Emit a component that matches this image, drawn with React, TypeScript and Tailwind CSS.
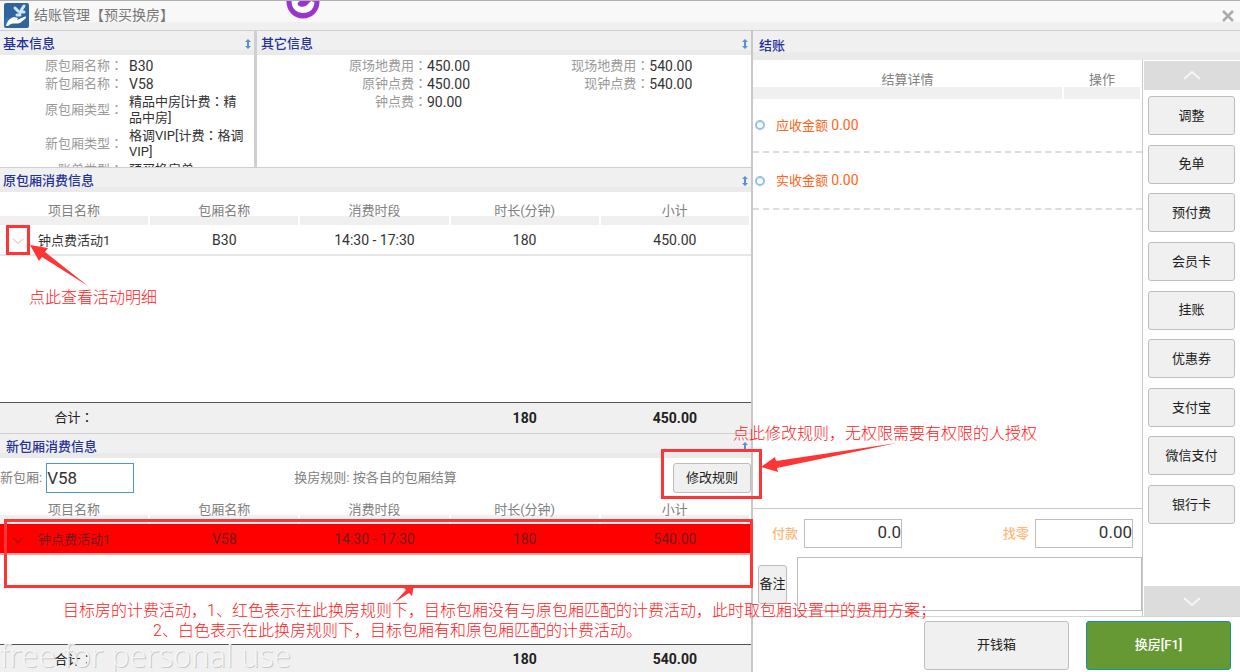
import { useState, type ReactNode } from 'react';

interface Consumo {
  name: string;
  room: string;
  period: string;
  minutes: string;
  amount: string;
  unmatched?: boolean;
}

const oldItems: Consumo[] = [
  { name: '钟点费活动1', room: 'B30', period: '14:30 - 17:30', minutes: '180', amount: '450.00' },
];

const newItems: Consumo[] = [
  { name: '钟点费活动1', room: 'V58', period: '14:30 - 17:30', minutes: '180', amount: '540.00', unmatched: true },
];

const details = [
  { label: '应收金额', amount: '0.00', height: 'h-[54px]' },
  { label: '实收金额', amount: '0.00', height: 'h-[57px]' },
];

const payMethods = ['调整', '免单', '预付费', '会员卡', '挂账', '优惠券', '支付宝', '微信支付', '银行卡'];

const btn = 'rounded-[3px] border border-[#bdbdbd] bg-[#f0f0f0] text-[#222] hover:bg-[#e6e6e6]';

// full-width colon centred in its box
function Colon() {
  return <span className="font-['Noto_Sans_CJK_TC',sans-serif] leading-[0]">：</span>;
}

function SortIcon() {
  return (
    <svg width="6" height="10" viewBox="0 0 6 10" fill="#5b8fd8">
      <path d="M3 0 L6 3 H4 V7 H6 L3 10 L0 7 H2 V3 H0 Z" />
    </svg>
  );
}

function Chevron({ className, up = false }: { className: string; up?: boolean }) {
  return (
    <svg viewBox="0 0 18 9" fill="none" stroke="currentColor" strokeWidth="2" className={className}>
      <path d={up ? 'M1 8 L9 1 L17 8' : 'M1 1 L9 8 L17 1'} />
    </svg>
  );
}

function PanelHeader({ title, className = 'pl-[3px]' }: { title: string; className?: string }) {
  return (
    <div
      className={`flex h-[25px] shrink-0 items-center justify-between border-t border-[#cfcfcf] bg-[linear-gradient(to_top,#eaeaea_5px,#f0f0f0_5px)] pt-[2px] pr-[3px] ${className}`}
    >
      <h2 className="text-[13px] font-medium text-[#25309a]">{title}</h2>
      <SortIcon />
    </div>
  );
}

function InfoRow({ label, labelWidth, small = false, children }: { label: string; labelWidth: string; small?: boolean; children: ReactNode }) {
  return (
    <div className="flex items-center py-px leading-4">
      <dt className={`shrink-0 text-right text-[13px] text-[#9a9a9a] ${labelWidth}`}>
        {label}
        <Colon />
      </dt>
      <dd className={`text-[#333] ${small ? 'text-[13px]' : 'text-[14px]'}`}>{children}</dd>
    </div>
  );
}

function ConsumeTable({ items, total, headClass, footClass }: { items: Consumo[]; total: string; headClass: string; footClass: string }) {
  return (
    <table className="h-full w-full table-fixed border-separate border-spacing-0 text-center text-[14px] text-[#333]">
      <thead>
        <tr>
          {['项目名称', '包厢名称', '消费时段', '时长(分钟)', '小计'].map((h) => (
            <th
              key={h}
              className={`border-r-2 border-white bg-[linear-gradient(to_top,#f0f0f0_9px,transparent_9px)] pb-1 align-bottom text-[13px] leading-5 font-normal text-[#808080] ${headClass}`}
            >
              {h}
            </th>
          ))}
        </tr>
      </thead>
      <tbody>
        {items.map((item) => (
          <tr
            key={item.name}
            className={
              item.unmatched
                ? 'bg-[#ff0000] text-[#701c1c] *:border-b-2 *:border-[#f0a0a0] *:pt-[2px] *:pr-[2px]'
                : '*:border-b-2 *:border-[#e6e6e6] *:pt-[2px] *:pr-[2px]'
            }
          >
            <td className="h-[31px]">
              <div className="flex items-center pl-3 text-[13px]">
                <button type="button" aria-label="查看明细" className={item.unmatched ? 'text-[#a01010]' : 'text-[#d8d8d8]'}>
                  <Chevron className="w-3" />
                </button>
                <span className="flex-1">{item.name}</span>
                <span className="w-6" />
              </div>
            </td>
            <td>{item.room}</td>
            <td>{item.period}</td>
            <td>{item.minutes}</td>
            <td>{item.amount}</td>
          </tr>
        ))}
        <tr>
          <td colSpan={5} />
        </tr>
      </tbody>
      <tfoot>
        <tr className="bg-[#f0f0f0] font-bold text-[#222] *:border-t *:border-[#555] *:pr-[2px]">
          <td className={`text-[13px] font-normal ${footClass}`}>
            合计
            <Colon />
          </td>
          <td className={footClass} />
          <td className={footClass} />
          <td className={footClass}>180</td>
          <td className={footClass}>{total}</td>
        </tr>
      </tfoot>
    </table>
  );
}

function Note({ className, children }: { className: string; children: ReactNode }) {
  return (
    <p className={`pointer-events-none absolute z-20 text-[16px] leading-5 font-light whitespace-nowrap text-[#ff2020] ${className}`}>
      {children}
    </p>
  );
}

function Arrow({ className, box, points }: { className: string; box: string; points: string }) {
  return (
    <svg viewBox={box} fill="#fd3535" className={`pointer-events-none absolute z-20 ${className}`}>
      <polygon points={points} />
    </svg>
  );
}

function TitleBar() {
  return (
    <header className="relative flex h-[30px] shrink-0 items-center justify-between overflow-hidden border-t border-[#b0b0b0] bg-[linear-gradient(to_top,#f0f0f0_8px,#f8f8f8_8px)] pr-[6px] pl-1">
      <div className="flex items-center gap-[5px]">
        <svg width="25" height="25" viewBox="0 0 25 25">
          <rect width="25" height="25" rx="2" fill="#2f659c" />
          <path d="M1 15 H7 L2 23 H1 Z" fill="#2a74c4" />
          <path d="M2 23 C3 18 6 15 10 14 L14 15 L13 17 L20 14 C22 13 23 14 21 16 L16 20 C13 21 9 20 7 21 L4 23 Z" fill="#fff" />
          <path d="M11 5 L14 8 M20 3 L18 6 L16 10 M13 12 L16 12 M19 9 L20 9" stroke="#cfe6fb" strokeWidth="3" fill="none" strokeLinecap="round" />
        </svg>
        <h1 className="text-[14px] text-[#777]">结账管理【预买换房】</h1>
      </div>
      <svg width="34" height="20" viewBox="0 0 34 20" className="absolute top-0 left-[286px]">
        <circle cx="17" cy="1" r="16.500" fill="#9a35cc" />
        <path d="M5.500 0 C5.500 8 11 12 17 12 C24 12 28 8 28.500 1 L25 0 L22 3 C20 6 14 7 12 4 C11 2 12 1 14 0 Z" fill="#fff" />
      </svg>
      <button type="button" aria-label="关闭" className="text-[#aaa]">
        <svg width="12" height="12" viewBox="0 0 12 12" stroke="currentColor" strokeWidth="2.500">
          <path d="M1 1 L11 11 M11 1 L1 11" />
        </svg>
      </button>
    </header>
  );
}

export default function App() {
  const [room, setRoom] = useState('V58');
  const [paid, setPaid] = useState('0.0');
  const [remark, setRemark] = useState('');

  return (
    <div className="flex h-screen min-h-[672px] flex-col overflow-hidden bg-white font-[Roboto,'Noto_Sans_CJK_SC',sans-serif] text-[13px]">
      <TitleBar />
      <main className="grid min-h-0 flex-1 grid-cols-[753fr_487fr]">
        {/* Left: room info and consumption */}
        <div className="relative flex min-h-0 flex-col border-r-2 border-[#c8c8c8]">
          <div className="flex h-[137px] shrink-0">
            <section className="flex w-[257px] shrink-0 flex-col overflow-hidden border-r-[3px] border-[#cfcfcf]">
              <PanelHeader title="基本信息" />
              <dl className="min-h-0 flex-1 overflow-hidden pt-[2px]">
                <InfoRow label="原包厢名称" labelWidth="w-[123px] mr-[6px]">B30</InfoRow>
                <InfoRow label="新包厢名称" labelWidth="w-[123px] mr-[6px]">V58</InfoRow>
                <InfoRow label="原包厢类型" labelWidth="w-[123px] mr-[6px]" small>
                  精品中房[计费<Colon />精<br />品中房]
                </InfoRow>
                <InfoRow label="新包厢类型" labelWidth="w-[123px] mr-[6px]" small>
                  格调VIP[计费<Colon />格调<br />VIP]
                </InfoRow>
                <InfoRow label="账单类型" labelWidth="w-[123px] mr-[6px]" small>预买换房单</InfoRow>
              </dl>
            </section>
            <section className="flex min-w-0 flex-1 flex-col">
              <PanelHeader title="其它信息" className="pl-1" />
              <div className="flex pt-[2px]">
                <dl className="w-[45%]">
                  <InfoRow label="原场地费用" labelWidth="w-[170px]">450.00</InfoRow>
                  <InfoRow label="原钟点费" labelWidth="w-[170px]">450.00</InfoRow>
                  <InfoRow label="钟点费" labelWidth="w-[170px]">90.00</InfoRow>
                </dl>
                <dl>
                  <InfoRow label="现场地费用" labelWidth="w-[170px]">540.00</InfoRow>
                  <InfoRow label="现钟点费" labelWidth="w-[170px]">540.00</InfoRow>
                </dl>
              </div>
            </section>
          </div>

          <section className="relative flex min-h-0 flex-[266_1_0%] flex-col">
            <PanelHeader title="原包厢消费信息" />
            <div className="min-h-0 flex-1">
              <ConsumeTable items={oldItems} total="450.00" headClass="h-[33px]" footClass="h-[31px]" />
            </div>
            <div className="pointer-events-none absolute top-[58px] left-[6px] h-[30px] w-6 border-[3px] border-[#fd3535]" />
            <Arrow className="top-[78px] left-[30px] h-[42px] w-[60px]" box="0 0 60 42" points="0,0 18,3 15,7 58,41 12,12 9,16" />
            <Note className="top-[121px] left-[29px]">点此查看活动明细</Note>
          </section>

          <section className="relative flex min-h-0 flex-[239_1_0%] flex-col">
            <PanelHeader title="新包厢消费信息" className="pl-[6px]" />
            <div className="grid h-[39px] shrink-0 grid-cols-[1fr_auto_1fr] items-center text-[#808080]">
              <div className="flex items-center gap-1">
                <label htmlFor="room">新包厢:</label>
                <input
                  id="room"
                  value={room}
                  onChange={(e) => setRoom(e.target.value)}
                  className="h-[30px] w-[88px] border border-[#4a96d2] text-[17px] text-[#333] outline-none"
                />
              </div>
              <p>换房规则: 按各自的包厢结算</p>
              <button type="button" className={`h-[30px] w-[78px] justify-self-end ${btn}`}>修改规则</button>
            </div>
            <div className="min-h-0 flex-1">
              <ConsumeTable items={newItems} total="540.00" headClass="h-[27px]" footClass="h-[28px] pt-[2px]" />
            </div>

            <div className="pointer-events-none absolute top-4 -right-[11px] z-10 h-[50px] w-[101px] border-[3px] border-[#fd3535]" />
            <Arrow className="top-[10px] left-full ml-[10px] h-[30px] w-[137px]" box="0 0 137 30" points="0,24 14,14 15,18 136,0 16,25 17,29" />
            <Note className="-top-[9px] left-full -ml-[18px]">点此修改规则，无权限需要有权限的人授权</Note>

            <div className="pointer-events-none absolute top-[86px] -right-[2px] left-1 h-[69px] border-[3px] border-[#fd3535]" />
            <Arrow className="top-[151px] left-[394px] h-[20px] w-[22px]" box="0 0 22 20" points="20,1 9,3 12,6 1,18 15,9 18,12" />
            <Note className="top-[168px] left-[63px]">
              目标房的计费活动，1、红色表示在此换房规则下，目标包厢没有与原包厢匹配的计费活动，此时取包厢设置中的费用方案；
            </Note>
            <Note className="top-[188px] left-[153px]">2、白色表示在此换房规则下，目标包厢有和原包厢匹配的计费活动。</Note>
          </section>
          <p className="pointer-events-none absolute -bottom-[6px] left-0 font-['Open_Sans',sans-serif] text-[31px] font-light whitespace-nowrap text-[#f6f6f6] [text-shadow:1px_1px_0_#c8c8c8]">
            free for personal use
          </p>
        </div>

        {/* Right: settlement */}
        <div className="flex min-h-0 min-w-0 flex-col">
          <div className="flex h-[30px] shrink-0 items-center border-t border-[#cfcfcf] bg-[linear-gradient(to_top,#eaeaea_8px,#f0f0f0_8px)] pl-[6px]">
            <h2 className="text-[13px] font-medium text-[#25309a]">结账</h2>
          </div>
          <div className="flex min-h-0 flex-1 border-b border-[#d4d4d4]">
            <div className="flex min-w-0 flex-1 flex-col border-r border-[#c8c8c8]">
              <div className="min-h-0 flex-1">
                <table className="w-full table-fixed border-separate border-spacing-0">
                  <thead>
                    <tr className="*:h-[39px] *:border-r-2 *:border-white *:bg-[linear-gradient(to_top,#f0f0f0_12px,transparent_12px)] *:pb-[9px] *:align-bottom *:leading-5 *:font-normal *:text-[#808080]">
                      <th className="w-4/5">结算详情</th>
                      <th>操作</th>
                    </tr>
                  </thead>
                  <tbody>
                    {details.map((d) => (
                      <tr key={d.label} className="*:border-b-2 *:border-dashed *:border-[#dcdcdc]">
                        <td colSpan={2} className={d.height}>
                          <label className="flex items-center gap-[11px] pl-[2px] text-[#ff6418]">
                            <input type="radio" name="detail" className="size-[10px] appearance-none rounded-full border-2 border-[#8fc3ea]" />
                            <span>
                              {d.label} <span className="text-[14px]">{d.amount}</span>
                            </span>
                          </label>
                        </td>
                      </tr>
                    ))}
                  </tbody>
                </table>
              </div>
              <div className="border-t border-[#c8c8c8] pt-[10px] pb-[5px]">
                <div className="flex items-center justify-between pr-[9px] pl-[19px] font-medium text-[#fdb878]">
                  <div className="flex items-center gap-[6px]">
                    <label htmlFor="paid">付款</label>
                    <input
                      id="paid"
                      value={paid}
                      onChange={(e) => setPaid(e.target.value)}
                      className="h-[29px] w-[98px] border border-[#bdbdbd] pb-[3px] text-right text-[17px] font-normal text-[#333]"
                    />
                  </div>
                  <div className="flex items-center gap-[6px]">
                    <label htmlFor="change">找零</label>
                    <input
                      id="change"
                      readOnly
                      value="0.00"
                      className="h-[29px] w-[98px] border border-[#bdbdbd] pb-[3px] text-right text-[17px] font-normal text-[#333]"
                    />
                  </div>
                </div>
                <div className="mt-[9px] flex items-center gap-[10px] pl-[5px]">
                  <button type="button" className={`h-[39px] w-[29px] shrink-0 ${btn}`}>备注</button>
                  <textarea
                    aria-label="备注"
                    value={remark}
                    onChange={(e) => setRemark(e.target.value)}
                    className="block h-[54px] min-w-0 flex-1 resize-none border border-[#bdbdbd]"
                  />
                </div>
              </div>
            </div>
            <aside className="flex w-[97px] shrink-0 flex-col justify-between pt-px pl-px">
              <div>
                <button type="button" aria-label="向上" className="flex h-[29px] w-full items-center justify-center bg-[#dcdcdc] text-[#f6f6f6]">
                  <Chevron up className="w-[18px]" />
                </button>
                <div className="mt-[6px] flex h-[428px] flex-col justify-between pr-[5px] pl-1">
                  {payMethods.map((m) => (
                    <button key={m} type="button" className={`h-[39px] ${btn}`}>{m}</button>
                  ))}
                </div>
              </div>
              <button type="button" aria-label="向下" className="flex h-[30px] w-full items-center justify-center bg-[#dcdcdc] text-[#f6f6f6]">
                <Chevron className="w-[18px]" />
              </button>
            </aside>
          </div>
          <footer className="flex h-[55px] shrink-0 items-center justify-end gap-[17px] pt-px pr-[9px]">
            <button type="button" className={`h-[49px] w-[145px] ${btn}`}>开钱箱</button>
            <button type="button" className="h-[49px] w-[145px] rounded-[3px] border border-[#12949a] bg-[#669933] font-medium text-white">
              换房[F1]
            </button>
          </footer>
        </div>
      </main>
    </div>
  );
}
